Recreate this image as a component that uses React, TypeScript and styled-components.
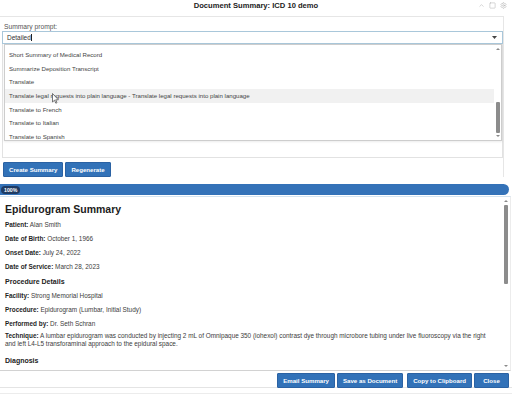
import React from "react";
import styled, { createGlobalStyle } from "styled-components";
import { ChevronUp, Square, Settings } from "lucide-react";

const GlobalStyle = createGlobalStyle`
  html, body { margin: 0; padding: 0; background: #fff; }
  body { font-family: "Liberation Sans", Arial, sans-serif; color: #333; }
  * { box-sizing: border-box; }
`;

const Window = styled.div`
  position: relative;
  width: 512px;
  height: 404px;
  overflow: hidden;
  display: flex;
  flex-direction: column;
  background: #fff;
`;

const TitleBar = styled.header`
  flex: none;
  height: 16px;
  display: grid;
  grid-template-columns: 1fr auto 1fr;
  align-items: center;
`;

const Title = styled.div`
  grid-column: 2;
  font-size: 7.6px;
  font-weight: 700;
  color: #222;
  line-height: 10px;
  margin-top: -4px;
`;

const WindowControls = styled.div`
  grid-column: 3;
  justify-self: end;
  display: flex;
  align-items: center;
  gap: 4px;
  padding-right: 5px;
  margin-top: -5px;
  color: #a8a8a8;
`;

const FormPanel = styled.section`
  flex: none;
  width: 504px;
  border-top: 1px solid #e6e6e6;
  border-right: 1px solid #e6e6e6;
  padding: 6px 0 0 2px;
`;

const FieldLabel = styled.div`
  height: 8px;
  line-height: 8px;
  font-size: 6.7px;
  color: #555;
  padding-left: 2px;
`;

const SelectBox = styled.div`
  width: 501px;
  height: 13px;
  border: 1px solid #a9c7da;
  display: flex;
  align-items: center;
  justify-content: space-between;
  padding: 0 5px 0 4px;
  font-size: 6.5px;
  color: #333;
`;

const Caret = styled.span`
  display: inline-block;
  width: 1px;
  height: 7px;
  background: #222;
  margin-left: 0.5px;
  vertical-align: middle;
`;

const PromptArea = styled.div`
  position: relative;
  width: 501px;
  height: 114px;
  border: 1px solid #e2e2e2;
  border-top: none;
`;

const DropdownList = styled.ul`
  position: absolute;
  top: 0;
  left: 1px;
  right: 0;
  height: 97px;
  margin: 0;
  padding: 0;
  list-style: none;
  display: flex;
  background: #fff;
  border: 1px solid #cdcdcd;
  box-shadow: 0 1px 2px rgba(0, 0, 0, 0.08);
`;

const OptionColumn = styled.div`
  flex: 1;
  padding-top: 3px;
  overflow: hidden;
`;

const Option = styled.li<{ $active?: boolean }>`
  height: 13.67px;
  line-height: 13.67px;
  padding-left: 4px;
  font-size: 6.1px;
  color: #444;
  white-space: nowrap;
  background: ${(p) => (p.$active ? "#f1f1f1" : "transparent")};
`;

const ScrollTrack = styled.div<{ $gapRight: number }>`
  flex: none;
  width: 5px;
  margin: 1px ${(p) => p.$gapRight}px 1px 1px;
  display: flex;
  flex-direction: column;
  align-items: center;
`;

const ScrollArrow = styled.div<{ $down?: boolean }>`
  flex: none;
  width: 0;
  height: 0;
  margin: 2px 0;
  border-left: 2px solid transparent;
  border-right: 2px solid transparent;
  ${(p) =>
    p.$down
      ? "border-top: 2.5px solid #8a8a8a;"
      : "border-bottom: 2.5px solid #8a8a8a;"}
`;

const ScrollThumb = styled.div<{ $offset: number; $size: number }>`
  flex: none;
  width: 4px;
  margin-top: ${(p) => p.$offset}px;
  height: ${(p) => p.$size}px;
  background: #8c8c8c;
  border-radius: 1px;
`;

const Spacer = styled.div`
  flex: 1;
`;

const ButtonRow = styled.div`
  display: flex;
  gap: 2px;
  margin-top: 4px;
  padding-left: 1px;
`;

const Button = styled.button`
  height: 15px;
  min-width: 35px;
  padding: 0 5px;
  border: 1px solid #2b62a3;
  border-radius: 1px;
  background: #3272b8;
  color: #fff;
  font-family: "Liberation Sans", Arial, sans-serif;
  font-size: 6.1px;
  font-weight: 700;
  line-height: 13px;
  white-space: nowrap;
  cursor: pointer;
`;

const ProgressBar = styled.div`
  flex: none;
  width: 509px;
  height: 11px;
  margin-top: 7px;
  background: #3472b8;
  border-radius: 0 6px 6px 0;
  display: flex;
  align-items: center;
  padding-left: 1px;
`;

const ProgressPill = styled.span`
  height: 8px;
  padding: 0 3px;
  border-radius: 4px;
  background: #1e3a62;
  color: #fff;
  font-size: 5.2px;
  font-weight: 700;
  line-height: 8px;
`;

const SummaryPane = styled.div`
  flex: none;
  width: 511px;
  height: 175px;
  margin-top: 1px;
  display: flex;
  border-top: 1px solid #d3e3f0;
  border-bottom: 1px solid #d2d2d2;
  border-right: 1px solid #ececec;
`;

const Article = styled.article`
  flex: 1;
  overflow: hidden;
  padding: 6px 0 0 5px;
  color: #3c3c3c;
`;

const Heading = styled.h2`
  margin: 0;
  font-size: 10.5px;
  line-height: 12px;
  font-weight: 700;
  color: #1c1c1c;
`;

const SubHeading = styled.h4<{ $space: number }>`
  margin: ${(p) => p.$space}px 0 0;
  font-size: 7px;
  line-height: 9px;
  font-weight: 700;
  color: #222;
`;

const Para = styled.p<{ $tight?: boolean }>`
  margin: ${(p) => (p.$tight ? "4px" : "6px")} 0 0;
  font-size: 6.4px;
  line-height: ${(p) => (p.$tight ? "7.5px" : "8px")};
  white-space: nowrap;
`;

const Key = styled.strong`
  font-weight: 700;
  color: #1f1f1f;
`;

const Footer = styled.footer`
  flex: none;
  display: flex;
  justify-content: flex-end;
  gap: 2px;
  padding: 2px 3px 0 0;
  height: 17px;
  border-bottom: 1px solid #e4e4e4;
`;

const GapButton = styled(Button)`
  margin-left: 2px;
`;

const BottomRule = styled.div`
  flex: none;
  margin-top: 5px;
  border-top: 1px solid #ececec;
`;

const Pointer = styled.svg`
  position: absolute;
  left: 52px;
  top: 93px;
`;

const options = [
  "Short Summary of Medical Record",
  "Summarize Deposition Transcript",
  "Translate",
  "Translate legal requests into plain language - Translate legal requests into plain language",
  "Translate to French",
  "Translate to Italian",
  "Translate to Spanish",
];

export default function App() {
  return (
    <>
      <GlobalStyle />
      <Window>
        <TitleBar>
          <Title>Document Summary: ICD 10 demo</Title>
          <WindowControls>
            <ChevronUp size={7} strokeWidth={1.6} />
            <Square size={7} strokeWidth={1.6} />
            <Settings size={7} strokeWidth={1.6} />
          </WindowControls>
        </TitleBar>

        <FormPanel>
          <FieldLabel>Summary prompt:</FieldLabel>
          <SelectBox>
            <span>
              Detailed
              <Caret />
            </span>
            <svg width="5" height="3" viewBox="0 0 5 3">
              <path d="M0 0h5L2.5 3z" fill="#444" />
            </svg>
          </SelectBox>
          <PromptArea>
            <DropdownList>
              <OptionColumn>
                {options.map((o, i) => (
                  <Option key={o} $active={i === 3}>
                    {o}
                  </Option>
                ))}
              </OptionColumn>
              <ScrollTrack $gapRight={1}>
                <ScrollArrow />
                <Spacer />
                <ScrollThumb $offset={0} $size={31} />
                <ScrollArrow $down />
              </ScrollTrack>
            </DropdownList>
          </PromptArea>
          <ButtonRow>
            <Button>Create Summary</Button>
            <Button>Regenerate</Button>
          </ButtonRow>
        </FormPanel>

        <ProgressBar>
          <ProgressPill>100%</ProgressPill>
        </ProgressBar>

        <SummaryPane>
          <Article>
            <Heading>Epidurogram Summary</Heading>
            <Para>
              <Key>Patient:</Key> Alan Smith
            </Para>
            <Para>
              <Key>Date of Birth:</Key> October 1, 1966
            </Para>
            <Para>
              <Key>Onset Date:</Key> July 24, 2022
            </Para>
            <Para>
              <Key>Date of Service:</Key> March 28, 2023
            </Para>
            <SubHeading $space={6}>Procedure Details</SubHeading>
            <Para>
              <Key>Facility:</Key> Strong Memorial Hospital
            </Para>
            <Para>
              <Key>Procedure:</Key> Epidurogram (Lumbar, Initial Study)
            </Para>
            <Para>
              <Key>Performed by:</Key> Dr. Seth Schran
            </Para>
            <Para $tight>
              <Key>Technique:</Key> A lumbar epidurogram was conducted by
              injecting 2 mL of Omnipaque 350 (iohexol) contrast dye through
              microbore tubing under live fluoroscopy via the right
              <br />
              and left L4-L5 transforaminal approach to the epidural space.
            </Para>
            <SubHeading $space={9}>Diagnosis</SubHeading>
          </Article>
          <ScrollTrack $gapRight={2}>
            <ScrollArrow />
            <ScrollThumb $offset={1} $size={79} />
            <Spacer />
            <ScrollArrow $down />
          </ScrollTrack>
        </SummaryPane>

        <Footer>
          <Button>Email Summary</Button>
          <Button>Save as Document</Button>
          <GapButton>Copy to Clipboard</GapButton>
          <Button>Close</Button>
        </Footer>
        <BottomRule />

        <Pointer width="7" height="11" viewBox="0 0 7 11">
          <path
            d="M0.5 0.5v8.5l2-1.8 1.3 3 1.2-.5-1.3-2.9h2.7z"
            fill="#fff"
            stroke="#555"
            strokeWidth="0.8"
            strokeLinejoin="round"
          />
        </Pointer>
      </Window>
    </>
  );
}
